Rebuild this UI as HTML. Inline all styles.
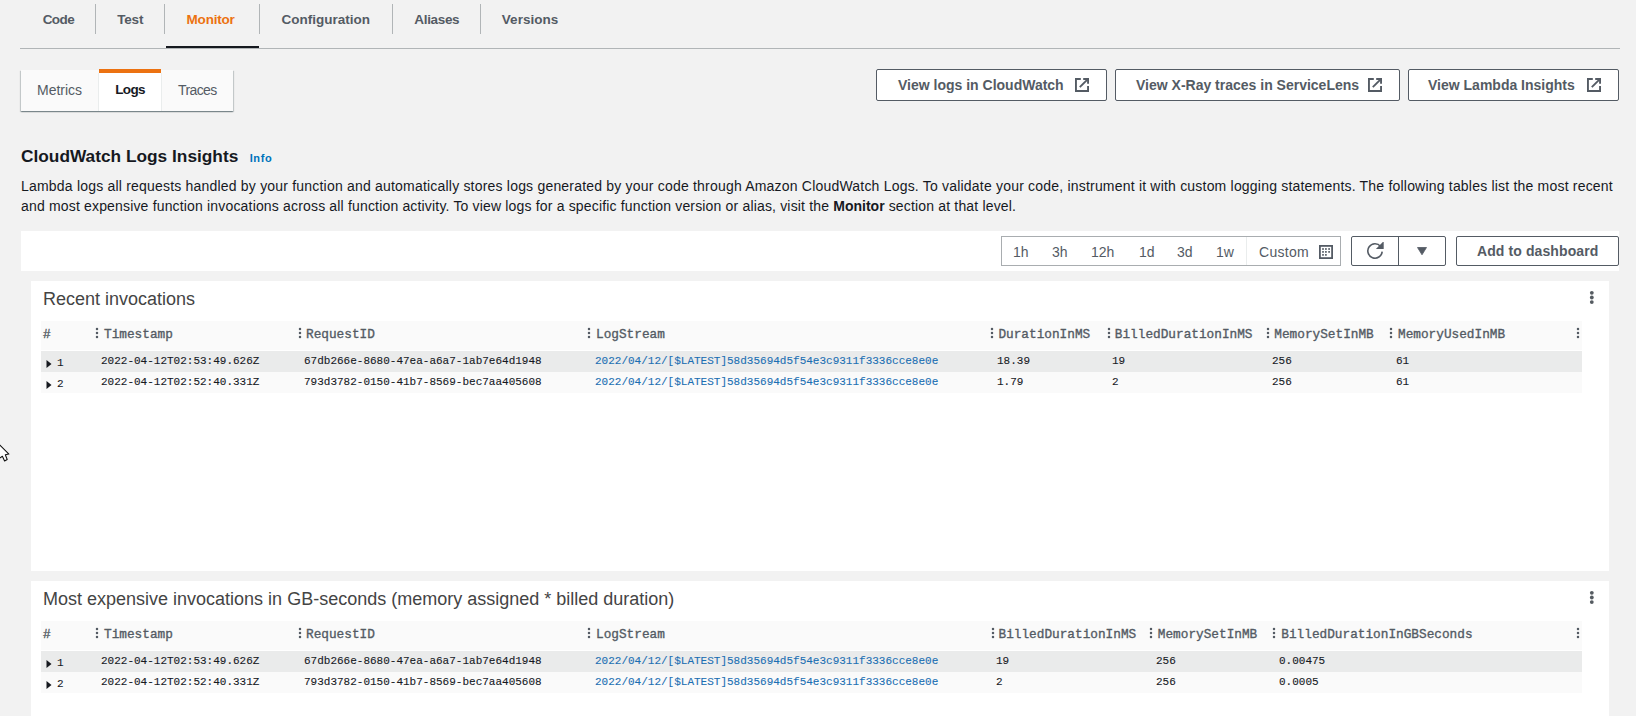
<!DOCTYPE html><html><head><meta charset="utf-8"><style>
*{margin:0;padding:0;box-sizing:border-box}
html,body{width:1636px;height:716px;overflow:hidden;background:#f2f2f2;font-family:"Liberation Sans",sans-serif;position:relative}
.ab{position:absolute;white-space:pre}
.tab{font-size:13.5px;font-weight:700;color:#545b64;line-height:20px}
.vd{position:absolute;width:1px;background:#b1b5b7}
.btn{position:absolute;background:#fff;border:1px solid #545b64;border-radius:2px}
.bt{font-size:14px;font-weight:700;color:#545b64;line-height:20px}
.body{font-size:14px;color:#16191f;line-height:20px;letter-spacing:0.2px}
.tr{font-size:14px;color:#545b64;line-height:20px}
.panel{position:absolute;background:#fff;left:31px;width:1578px}
.ptitle{font-size:18px;color:#444;line-height:22px}
.hd{font-family:"Liberation Mono",monospace;font-size:12.75px;color:#545b64;line-height:16px;font-weight:400;-webkit-text-stroke:0.35px #545b64}
.dt{font-family:"Liberation Mono",monospace;font-size:11px;color:#16191f;line-height:14px;-webkit-text-stroke:0.1px}
.lk{color:#1b6fb3}
.rz{position:absolute;width:2px}
.rz i{position:absolute;left:0;width:2px;height:2px;background:#545b64;border-radius:1px}
.pm i{position:absolute;left:0;width:4px;height:4px;background:#545b64;border-radius:2px}
</style></head><body>
<div class="ab tab" style="left:42.7px;top:10px;color:#545b64;letter-spacing:-0.57px">Code</div>
<div class="ab tab" style="left:117.2px;top:10px;color:#545b64;letter-spacing:-0.17px">Test</div>
<div class="ab tab" style="left:186.6px;top:10px;color:#ec7211;letter-spacing:-0.22px">Monitor</div>
<div class="ab tab" style="left:281.6px;top:10px;color:#545b64;letter-spacing:0px">Configuration</div>
<div class="ab tab" style="left:414.3px;top:10px;color:#545b64;letter-spacing:-0.33px">Aliases</div>
<div class="ab tab" style="left:501.8px;top:10px;color:#545b64;letter-spacing:0.04px">Versions</div>
<div class="vd" style="left:95px;top:4px;height:30px"></div>
<div class="vd" style="left:164px;top:4px;height:30px"></div>
<div class="vd" style="left:259px;top:4px;height:30px"></div>
<div class="vd" style="left:392px;top:4px;height:30px"></div>
<div class="vd" style="left:480px;top:4px;height:30px"></div>
<div class="ab" style="left:20px;top:48px;width:1600px;height:1px;background:#b1b5b7"></div>
<div class="ab" style="left:166px;top:46px;width:93px;height:2px;background:#16191f"></div>
<div class="ab" style="left:21px;top:70px;width:212px;height:41px;background:#fafafa;box-shadow:0 1px 1px 0 rgba(0,28,36,.3),1px 1px 1px 0 rgba(0,28,36,.15),-1px 1px 1px 0 rgba(0,28,36,.15)"></div>
<div class="ab" style="left:99px;top:73px;width:62px;height:38px;background:#fff"></div>
<div class="ab" style="left:99px;top:69px;width:62px;height:4px;background:#ec7211"></div>
<div class="ab" style="left:98px;top:73px;width:1px;height:38px;background:#eaeded"></div>
<div class="ab" style="left:161px;top:73px;width:1px;height:38px;background:#eaeded"></div>
<div class="ab tr" style="left:37px;top:80px">Metrics</div>
<div class="ab tab" style="left:115.3px;top:80px;color:#16191f;font-size:13.5px;letter-spacing:-0.7px">Logs</div>
<div class="ab tr" style="left:178px;top:80px;letter-spacing:-0.6px">Traces</div>
<div class="btn" style="left:876px;top:69px;width:231px;height:32px">
<div class="ab bt" style="left:21px;top:5px">View logs in CloudWatch</div>
<svg width="14" height="14" viewBox="0 0 14 14" style="position:absolute;left:198px;top:8px" fill="none" stroke="#545b64" stroke-width="1.9"><path d="M5.8 0.95H0.95V13.05H13.05V8.1"/><path d="M8.2 0.95H13.05V5.7"/><path d="M12.6 1.4L4.8 9.2"/></svg>
</div>
<div class="btn" style="left:1115px;top:69px;width:285px;height:32px">
<div class="ab bt" style="left:20px;top:5px">View X-Ray traces in ServiceLens</div>
<svg width="14" height="14" viewBox="0 0 14 14" style="position:absolute;left:252px;top:8px" fill="none" stroke="#545b64" stroke-width="1.9"><path d="M5.8 0.95H0.95V13.05H13.05V8.1"/><path d="M8.2 0.95H13.05V5.7"/><path d="M12.6 1.4L4.8 9.2"/></svg>
</div>
<div class="btn" style="left:1408px;top:69px;width:211px;height:32px">
<div class="ab bt" style="left:19px;top:5px">View Lambda Insights</div>
<svg width="14" height="14" viewBox="0 0 14 14" style="position:absolute;left:178px;top:8px" fill="none" stroke="#545b64" stroke-width="1.9"><path d="M5.8 0.95H0.95V13.05H13.05V8.1"/><path d="M8.2 0.95H13.05V5.7"/><path d="M12.6 1.4L4.8 9.2"/></svg>
</div>
<div class="ab" style="left:21px;top:145px;font-size:17.3px;font-weight:700;color:#16191f;line-height:22px">CloudWatch Logs Insights</div>
<div class="ab" style="left:249.7px;top:151px;font-size:11px;font-weight:700;color:#0073bb;line-height:14px;letter-spacing:0.6px">Info</div>
<div class="ab body" style="left:21px;top:176px">Lambda logs all requests handled by your function and automatically stores logs generated by your code through Amazon CloudWatch Logs. To validate your code, instrument it with custom logging statements. The following tables list the most recent</div>
<div class="ab body" style="left:21px;top:196px;letter-spacing:0.17px">and most expensive function invocations across all function activity. To view logs for a specific function version or alias, visit the <b style="letter-spacing:0">Monitor</b> section at that level.</div>
<div class="ab" style="left:21px;top:231px;width:1598px;height:40px;background:#fff"></div>
<div class="ab" style="left:1001px;top:236px;width:340px;height:30px;border:1px solid #a9adb0"></div>
<div class="ab" style="left:1246px;top:237px;width:1px;height:28px;background:#eaeded"></div>
<div class="ab tr" style="left:1013px;top:242px;letter-spacing:0px">1h</div>
<div class="ab tr" style="left:1052px;top:242px;letter-spacing:0px">3h</div>
<div class="ab tr" style="left:1091px;top:242px;letter-spacing:0px">12h</div>
<div class="ab tr" style="left:1139px;top:242px;letter-spacing:0px">1d</div>
<div class="ab tr" style="left:1177px;top:242px;letter-spacing:0px">3d</div>
<div class="ab tr" style="left:1216px;top:242px;letter-spacing:0px">1w</div>
<div class="ab tr" style="left:1259px;top:242px;letter-spacing:0.3px">Custom</div>
<svg class="ab" style="left:1319px;top:245px" width="14" height="14" viewBox="0 0 14 14"><rect x="0.9" y="0.9" width="12.2" height="12.2" fill="none" stroke="#545b64" stroke-width="1.8"/><rect x="3.15" y="3.15" width="1.7" height="1.7" fill="#545b64"/><rect x="6.05" y="3.15" width="1.7" height="1.7" fill="#545b64"/><rect x="9.25" y="3.15" width="1.7" height="1.7" fill="#545b64"/><rect x="3.15" y="6.05" width="1.7" height="1.7" fill="#545b64"/><rect x="6.05" y="6.05" width="1.7" height="1.7" fill="#545b64"/><rect x="9.25" y="6.05" width="1.7" height="1.7" fill="#545b64"/><rect x="3.15" y="9.05" width="1.7" height="1.7" fill="#545b64"/><rect x="6.05" y="9.05" width="1.7" height="1.7" fill="#545b64"/></svg>
<div class="btn" style="left:1351px;top:236px;width:95px;height:30px"></div>
<div class="ab" style="left:1398px;top:237px;width:1px;height:28px;background:#545b64"></div>
<svg class="ab" style="left:1366px;top:242px" width="18" height="18" viewBox="0 0 18 18" fill="none" stroke="#545b64" stroke-width="1.6"><path d="M16.2 9.6A7.2 7.2 0 1 1 14.6 4.4"/><path d="M11.8 6.2H16.9V1.1z" fill="#545b64" stroke-linejoin="miter"/></svg>
<svg class="ab" style="left:1417px;top:247px" width="10" height="8" viewBox="0 0 10 8"><path d="M0.5 0.5h9L5 7.8z" fill="#545b64" stroke="#545b64" stroke-width="0.8" stroke-linejoin="round"/></svg>
<div class="btn" style="left:1456px;top:236px;width:163px;height:30px"></div>
<div class="ab bt" style="left:1477px;top:241px;letter-spacing:0.1px">Add to dashboard</div>
<div class="panel" style="top:281px;height:290px"></div>
<div class="ab ptitle" style="left:43px;top:288px">Recent invocations</div>
<svg class="ab" style="left:1589px;top:290px" width="6" height="16" viewBox="0 0 6 16" fill="#555b61"><circle cx="2.8" cy="2.8" r="1.9"/><circle cx="2.8" cy="7.5" r="1.9"/><circle cx="2.8" cy="12.1" r="1.9"/></svg>
<div class="ab" style="left:41px;top:321px;width:1541px;height:29px;background:#fafafa"></div>
<div class="ab hd" style="left:43px;top:327px">#</div>
<svg class="ab" style="left:95px;top:327px" width="4" height="12" viewBox="0 0 4 12" fill="#545b64"><circle cx="2" cy="2" r="1.25"/><circle cx="2" cy="6" r="1.25"/><circle cx="2" cy="10" r="1.25"/></svg>
<div class="ab hd" style="left:104px;top:327px">Timestamp</div>
<svg class="ab" style="left:297.7px;top:327px" width="4" height="12" viewBox="0 0 4 12" fill="#545b64"><circle cx="2" cy="2" r="1.25"/><circle cx="2" cy="6" r="1.25"/><circle cx="2" cy="10" r="1.25"/></svg>
<div class="ab hd" style="left:306px;top:327px">RequestID</div>
<svg class="ab" style="left:586.7px;top:327px" width="4" height="12" viewBox="0 0 4 12" fill="#545b64"><circle cx="2" cy="2" r="1.25"/><circle cx="2" cy="6" r="1.25"/><circle cx="2" cy="10" r="1.25"/></svg>
<div class="ab hd" style="left:596px;top:327px">LogStream</div>
<svg class="ab" style="left:990.2px;top:327px" width="4" height="12" viewBox="0 0 4 12" fill="#545b64"><circle cx="2" cy="2" r="1.25"/><circle cx="2" cy="6" r="1.25"/><circle cx="2" cy="10" r="1.25"/></svg>
<div class="ab hd" style="left:998.4px;top:327px">DurationInMS</div>
<svg class="ab" style="left:1106.6px;top:327px" width="4" height="12" viewBox="0 0 4 12" fill="#545b64"><circle cx="2" cy="2" r="1.25"/><circle cx="2" cy="6" r="1.25"/><circle cx="2" cy="10" r="1.25"/></svg>
<div class="ab hd" style="left:1114.8px;top:327px">BilledDurationInMS</div>
<svg class="ab" style="left:1266px;top:327px" width="4" height="12" viewBox="0 0 4 12" fill="#545b64"><circle cx="2" cy="2" r="1.25"/><circle cx="2" cy="6" r="1.25"/><circle cx="2" cy="10" r="1.25"/></svg>
<div class="ab hd" style="left:1274.3px;top:327px">MemorySetInMB</div>
<svg class="ab" style="left:1389.1px;top:327px" width="4" height="12" viewBox="0 0 4 12" fill="#545b64"><circle cx="2" cy="2" r="1.25"/><circle cx="2" cy="6" r="1.25"/><circle cx="2" cy="10" r="1.25"/></svg>
<div class="ab hd" style="left:1398px;top:327px">MemoryUsedInMB</div>
<svg class="ab" style="left:1576px;top:327px" width="4" height="12" viewBox="0 0 4 12" fill="#545b64"><circle cx="2" cy="2" r="1.25"/><circle cx="2" cy="6" r="1.25"/><circle cx="2" cy="10" r="1.25"/></svg>
<div class="ab" style="left:41px;top:351px;width:1541px;height:21px;background:#eaebeb"></div>
<svg class="ab" style="left:46px;top:360px" width="6" height="8" viewBox="0 0 6 8"><path d="M0.5 0L5.5 4L0.5 8z" fill="#16191f"/></svg>
<div class="ab dt" style="left:57px;top:356px">1</div>
<div class="ab dt" style="left:101px;top:354px">2022-04-12T02:53:49.626Z</div>
<div class="ab dt" style="left:304px;top:354px">67db266e-8680-47ea-a6a7-1ab7e64d1948</div>
<div class="ab dt lk" style="left:595px;top:354px">2022/04/12/[$LATEST]58d35694d5f54e3c9311f3336cce8e0e</div>
<div class="ab dt" style="left:997px;top:354px">18.39</div>
<div class="ab dt" style="left:1112px;top:354px">19</div>
<div class="ab dt" style="left:1272px;top:354px">256</div>
<div class="ab dt" style="left:1396px;top:354px">61</div>
<div class="ab" style="left:41px;top:372px;width:1541px;height:21px;background:#fafafa"></div>
<svg class="ab" style="left:46px;top:381px" width="6" height="8" viewBox="0 0 6 8"><path d="M0.5 0L5.5 4L0.5 8z" fill="#16191f"/></svg>
<div class="ab dt" style="left:57px;top:377px">2</div>
<div class="ab dt" style="left:101px;top:375px">2022-04-12T02:52:40.331Z</div>
<div class="ab dt" style="left:304px;top:375px">793d3782-0150-41b7-8569-bec7aa405608</div>
<div class="ab dt lk" style="left:595px;top:375px">2022/04/12/[$LATEST]58d35694d5f54e3c9311f3336cce8e0e</div>
<div class="ab dt" style="left:997px;top:375px">1.79</div>
<div class="ab dt" style="left:1112px;top:375px">2</div>
<div class="ab dt" style="left:1272px;top:375px">256</div>
<div class="ab dt" style="left:1396px;top:375px">61</div>
<div class="panel" style="top:581px;height:140px"></div>
<div class="ab ptitle" style="left:43px;top:588px">Most expensive invocations in GB-seconds (memory assigned * billed duration)</div>
<svg class="ab" style="left:1589px;top:590px" width="6" height="16" viewBox="0 0 6 16" fill="#555b61"><circle cx="2.8" cy="2.8" r="1.9"/><circle cx="2.8" cy="7.5" r="1.9"/><circle cx="2.8" cy="12.1" r="1.9"/></svg>
<div class="ab" style="left:41px;top:621px;width:1541px;height:29px;background:#fafafa"></div>
<div class="ab hd" style="left:43px;top:627px">#</div>
<svg class="ab" style="left:95px;top:627px" width="4" height="12" viewBox="0 0 4 12" fill="#545b64"><circle cx="2" cy="2" r="1.25"/><circle cx="2" cy="6" r="1.25"/><circle cx="2" cy="10" r="1.25"/></svg>
<div class="ab hd" style="left:104px;top:627px">Timestamp</div>
<svg class="ab" style="left:297.7px;top:627px" width="4" height="12" viewBox="0 0 4 12" fill="#545b64"><circle cx="2" cy="2" r="1.25"/><circle cx="2" cy="6" r="1.25"/><circle cx="2" cy="10" r="1.25"/></svg>
<div class="ab hd" style="left:306px;top:627px">RequestID</div>
<svg class="ab" style="left:586.7px;top:627px" width="4" height="12" viewBox="0 0 4 12" fill="#545b64"><circle cx="2" cy="2" r="1.25"/><circle cx="2" cy="6" r="1.25"/><circle cx="2" cy="10" r="1.25"/></svg>
<div class="ab hd" style="left:596px;top:627px">LogStream</div>
<svg class="ab" style="left:990.5px;top:627px" width="4" height="12" viewBox="0 0 4 12" fill="#545b64"><circle cx="2" cy="2" r="1.25"/><circle cx="2" cy="6" r="1.25"/><circle cx="2" cy="10" r="1.25"/></svg>
<div class="ab hd" style="left:998.5px;top:627px">BilledDurationInMS</div>
<svg class="ab" style="left:1149.4px;top:627px" width="4" height="12" viewBox="0 0 4 12" fill="#545b64"><circle cx="2" cy="2" r="1.25"/><circle cx="2" cy="6" r="1.25"/><circle cx="2" cy="10" r="1.25"/></svg>
<div class="ab hd" style="left:1157.8px;top:627px">MemorySetInMB</div>
<svg class="ab" style="left:1272.4px;top:627px" width="4" height="12" viewBox="0 0 4 12" fill="#545b64"><circle cx="2" cy="2" r="1.25"/><circle cx="2" cy="6" r="1.25"/><circle cx="2" cy="10" r="1.25"/></svg>
<div class="ab hd" style="left:1281.3px;top:627px">BilledDurationInGBSeconds</div>
<svg class="ab" style="left:1575.7px;top:627px" width="4" height="12" viewBox="0 0 4 12" fill="#545b64"><circle cx="2" cy="2" r="1.25"/><circle cx="2" cy="6" r="1.25"/><circle cx="2" cy="10" r="1.25"/></svg>
<div class="ab" style="left:41px;top:651px;width:1541px;height:21px;background:#eaebeb"></div>
<svg class="ab" style="left:46px;top:660px" width="6" height="8" viewBox="0 0 6 8"><path d="M0.5 0L5.5 4L0.5 8z" fill="#16191f"/></svg>
<div class="ab dt" style="left:57px;top:656px">1</div>
<div class="ab dt" style="left:101px;top:654px">2022-04-12T02:53:49.626Z</div>
<div class="ab dt" style="left:304px;top:654px">67db266e-8680-47ea-a6a7-1ab7e64d1948</div>
<div class="ab dt lk" style="left:595px;top:654px">2022/04/12/[$LATEST]58d35694d5f54e3c9311f3336cce8e0e</div>
<div class="ab dt" style="left:996px;top:654px">19</div>
<div class="ab dt" style="left:1156px;top:654px">256</div>
<div class="ab dt" style="left:1279px;top:654px">0.00475</div>
<div class="ab" style="left:41px;top:672px;width:1541px;height:21px;background:#fafafa"></div>
<svg class="ab" style="left:46px;top:681px" width="6" height="8" viewBox="0 0 6 8"><path d="M0.5 0L5.5 4L0.5 8z" fill="#16191f"/></svg>
<div class="ab dt" style="left:57px;top:677px">2</div>
<div class="ab dt" style="left:101px;top:675px">2022-04-12T02:52:40.331Z</div>
<div class="ab dt" style="left:304px;top:675px">793d3782-0150-41b7-8569-bec7aa405608</div>
<div class="ab dt lk" style="left:595px;top:675px">2022/04/12/[$LATEST]58d35694d5f54e3c9311f3336cce8e0e</div>
<div class="ab dt" style="left:996px;top:675px">2</div>
<div class="ab dt" style="left:1156px;top:675px">256</div>
<div class="ab dt" style="left:1279px;top:675px">0.0005</div>
<svg class="ab" style="left:0;top:441px" width="14" height="24" viewBox="0 0 14 24"><path d="M-3 1.2L8.9 13.1L5.3 13.8L7.2 18.5L4.6 20L2.4 15.3L-3 19z" fill="#fff" stroke="#111" stroke-width="1.05" stroke-linejoin="round"/></svg>
</body></html>
